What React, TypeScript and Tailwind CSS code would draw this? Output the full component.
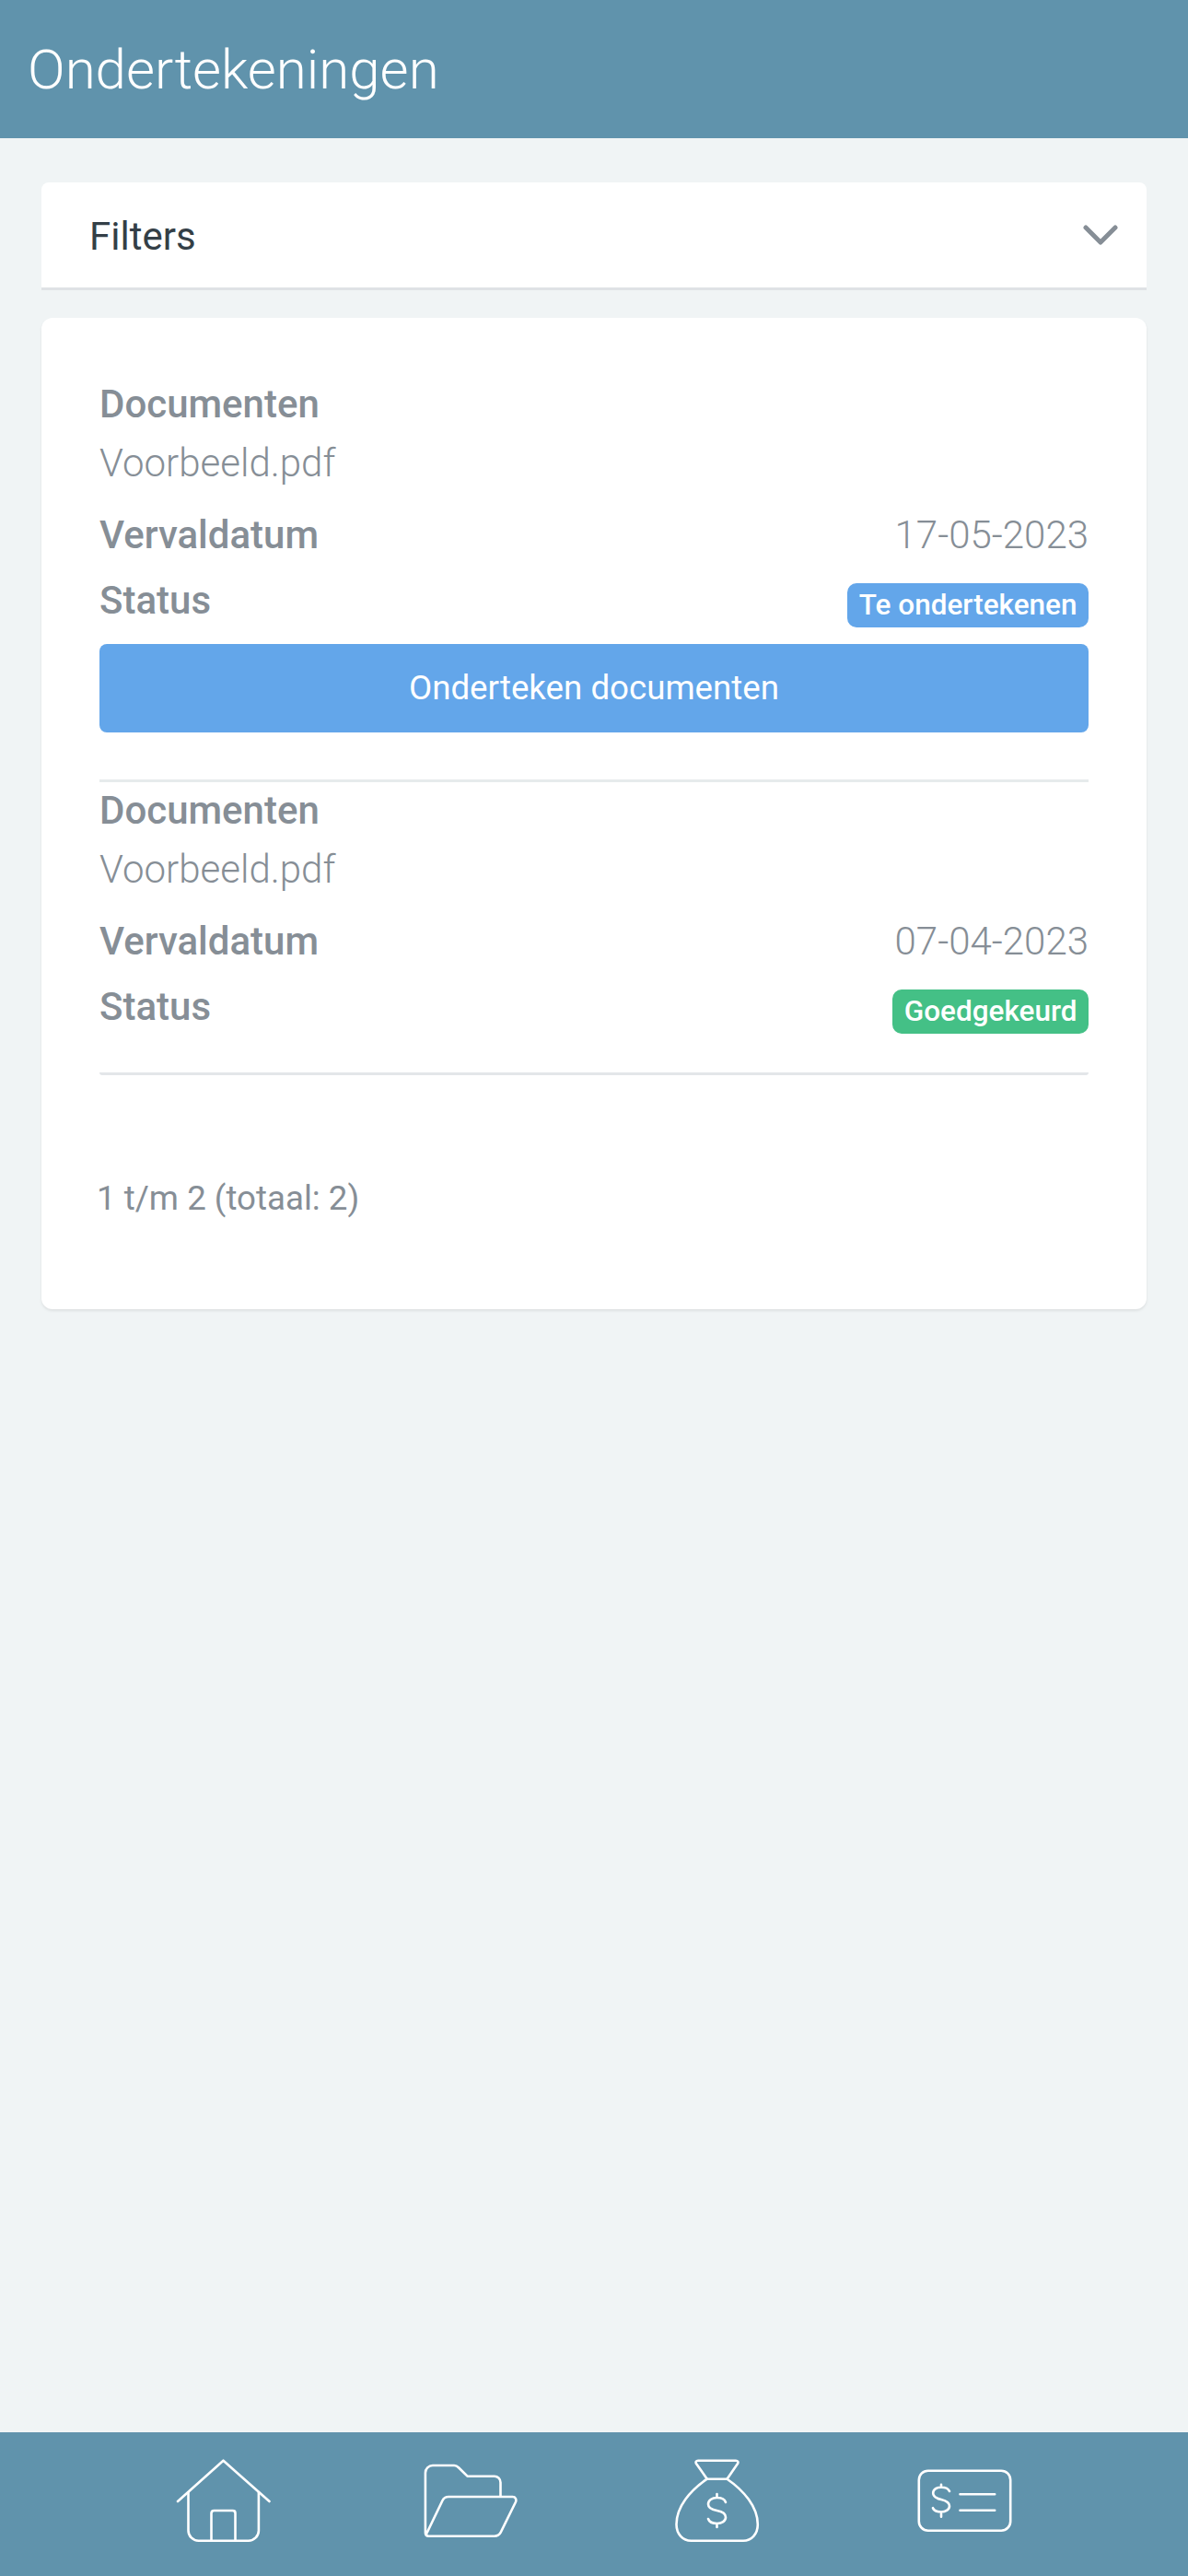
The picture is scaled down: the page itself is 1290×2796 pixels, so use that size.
const LABEL = "text-[42px] font-medium text-[#868e96]";
const VALUE = "text-[42px] font-light text-[#868e96]";

function DocumentItem({
  date,
  status,
  badgeClass,
  withButton,
}: {
  date: string;
  status: string;
  badgeClass: string;
  withButton?: boolean;
}) {
  return (
    <div>
      <div className={`h-[62px] leading-[62px] ${LABEL}`}>Documenten</div>
      <div className={`h-[66px] leading-[66px] ${VALUE}`}>Voorbeeld.pdf</div>
      <div className="mt-[4px] flex h-[80px] items-center justify-between">
        <span className={LABEL}>Vervaldatum</span>
        <span className={VALUE}>{date}</span>
      </div>
      <div className="flex h-[65px] items-start justify-between">
        <span className={`leading-[64px] ${LABEL}`}>Status</span>
        <span
          className={`mt-[13px] flex h-[48px] items-center rounded-[10px] px-[12.5px] text-[31.5px] font-medium text-white ${badgeClass}`}
        >
          {status}
        </span>
      </div>
      {withButton && (
        <div className="mt-[14px] flex h-[96px] items-center justify-center rounded-[8px] bg-[#63a6ea] text-[36.7px] text-white">
          Onderteken documenten
        </div>
      )}
    </div>
  );
}

function HomeIcon() {
  return (
    <svg viewBox="0 0 110 90" className="h-[90px] w-[110px]" fill="none" stroke="#fff" strokeWidth="2.6" strokeLinecap="round" strokeLinejoin="round">
      <path d="M5 46 54.500 1.700 104.500 46" />
      <path d="M16.500 36v41.700c0 6 5 11 11 11h54.400c6 0 11-5 11-11V36" />
      <path d="M41.500 88.700V59c0-2 1-3 3-3h20c2 0 3 1 3 3v29.700" />
    </svg>
  );
}

function FolderIcon() {
  return (
    <svg viewBox="0 0 110 90" className="h-[90px] w-[110px]" fill="none" stroke="#fff" strokeWidth="2.6" strokeLinecap="round" strokeLinejoin="round">
      <path d="M87.500 40.500V25.500c0-4-3-6.800-6.600-6.800H51.500L42.200 9.500C40.700 8 39.700 7 37.200 7H13.900c-4.500 0-8 3.500-8 8v65c0 2.500 1.200 3.700 3.500 3.700h71.500c3 0 5.500-1.500 6.800-4L103.800 47c1.400-3.200-.1-6-3.200-6H31.200c-3.200 0-5.500 1.400-6.800 4.200L7.200 81" />
    </svg>
  );
}

function MoneyBagIcon() {
  return (
    <svg viewBox="0 0 110 90" className="h-[90px] w-[110px]" fill="none" stroke="#fff" strokeWidth="2.6" strokeLinecap="round" strokeLinejoin="round">
      <path d="M43.800 21.700 32 5c-1-1.800 0-3.300 2-3.300h41c2 0 3 1.500 2 3.300L65.500 21.700Z" />
      <path d="M43.800 21.700C25.500 34 10.500 52 10.500 71c0 10.500 7 17.700 16 17.700H83c9 0 15.800-7.200 15.800-17.700 0-19-15.300-37-33.300-49.300" />
      <path d="M64 47c-1-3-5-5-9.500-5-5.500 0-9.500 3-9.500 7 0 4.200 4 6 9.500 7 5.500 1 9.500 3 9.500 7.200 0 4-4 6.800-9.500 6.800-5 0-8.500-2-9.500-5M54.500 38v4M54.500 70v4" />
    </svg>
  );
}

function CheckIcon() {
  return (
    <svg viewBox="0 0 110 90" className="h-[90px] w-[110px]" fill="none" stroke="#fff" strokeWidth="2.6" strokeLinecap="round" strokeLinejoin="round">
      <rect x="5.800" y="12.700" width="99.400" height="65" rx="10" />
      <path d="M39 35c-1-2.500-4.500-4.300-9-4.300-5 0-8.800 2.500-8.800 6.300 0 4 3.800 5.800 8.800 7 5 1.200 9 3 9 7 0 3.800-4 6.500-9 6.500-4.500 0-8-1.800-9-4.300M30 27.700v3M30 59.500v3.200" />
      <path d="M50.500 38.300h37.700M50.500 55.700h37.700" />
    </svg>
  );
}

export default function App() {
  return (
    <div className="flex min-h-[2796px] flex-col bg-[#f0f4f5] font-['Roboto',sans-serif]">
      <header className="flex h-[150px] items-center bg-[#6093ac] pt-[2px] pl-[30px] text-[60px] font-light text-white">
        Ondertekeningen
      </header>

      <main className="flex-1 px-[45px] pt-[48px]">
        {/* Filters */}
        <div className="flex h-[117px] items-center justify-between rounded-t-[8px] border-b-[3px] border-[#dfe2e5] bg-white pr-[31px] pl-[52px]">
          <span className="pt-[2px] text-[42px] text-[#343f47]">Filters</span>
          <svg viewBox="0 0 38 22" className="h-[22px] w-[38px]" fill="none" stroke="#868e96" strokeWidth="5" strokeLinecap="round" strokeLinejoin="round">
            <path d="M3 3 19 19 35 3" />
          </svg>
        </div>

        {/* Lijst */}
        <div className="mt-[30px] rounded-[12px] bg-white px-[63px] pt-[63px] pb-[90px] shadow-[0_2px_3px_rgba(0,0,0,0.08)]">
          <DocumentItem date="17-05-2023" status="Te ondertekenen" badgeClass="bg-[#63a6ea]" withButton />
          <div className="mt-[51px] h-[3px] bg-[#e6ebec]" />
          <DocumentItem date="07-04-2023" status="Goedgekeurd" badgeClass="bg-[#44c086]" />
          <div className="mt-[38px] h-[3px] rounded-b-[3px] bg-[#e3e6e9]" />
          <div className="-ml-[3px] mt-[104px] h-[60px] text-[36.700px] leading-[60px] text-[#868e96]">
            1 t/m 2 (totaal: 2)
          </div>
        </div>
      </main>

      <nav className="flex h-[156px] justify-center bg-[#6093ac] pt-[29px]">
        <div className="flex w-[268px] justify-center">
          <HomeIcon />
        </div>
        <div className="flex w-[268px] justify-center">
          <FolderIcon />
        </div>
        <div className="flex w-[268px] justify-center">
          <MoneyBagIcon />
        </div>
        <div className="flex w-[268px] justify-center">
          <CheckIcon />
        </div>
      </nav>
    </div>
  );
}
